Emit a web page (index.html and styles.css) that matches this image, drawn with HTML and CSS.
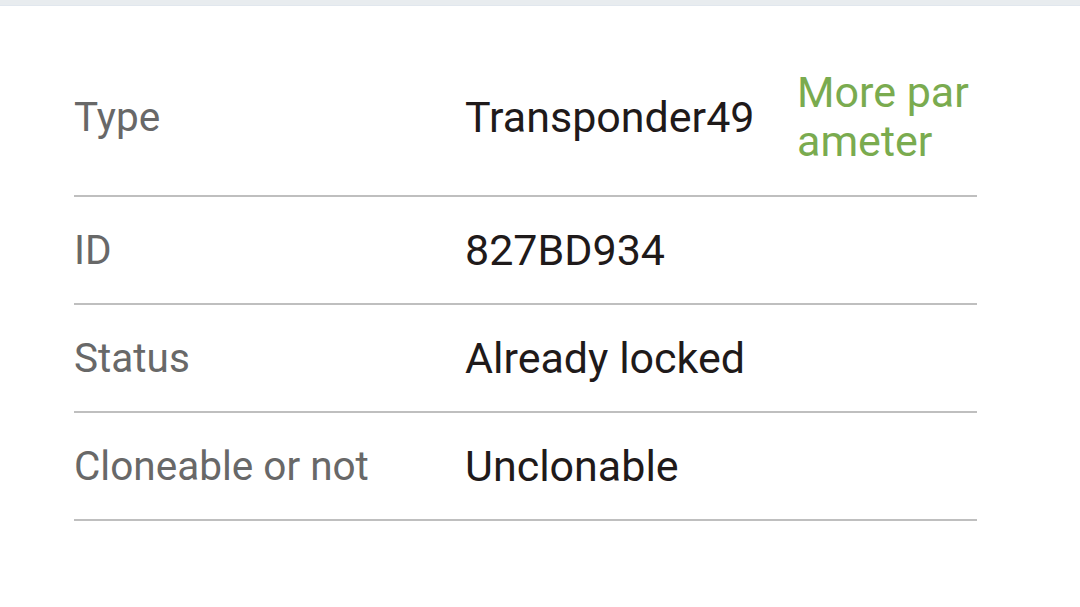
FILE: index.html
```html
<!DOCTYPE html>
<html>
<head>
<meta charset="utf-8">
<link rel="stylesheet" href="styles.css">
</head>
<body>
<div class="topbar"></div>
<div class="table">
  <div class="row">
    <div class="label">Type</div>
    <div class="value">Transponder49</div>
    <div class="more">More parameter</div>
  </div>
  <div class="row">
    <div class="label">ID</div>
    <div class="value">827BD934</div>
    <div class="more"></div>
  </div>
  <div class="row">
    <div class="label">Status</div>
    <div class="value">Already locked</div>
    <div class="more"></div>
  </div>
  <div class="row">
    <div class="label">Cloneable or not</div>
    <div class="value">Unclonable</div>
    <div class="more"></div>
  </div>
</div>
</body>
</html>
```
FILE: styles.css
```css
html, body {
  margin: 0;
  padding: 0;
  background: #ffffff;
  font-family: Roboto, "Noto Sans", sans-serif;
}
.topbar {
  height: 5px;
  background: #e8ecef;
  border-bottom: 1px solid #e1e7ee;
}
.table {
  margin: 33px 103px 0 74px;
}
.row {
  display: grid;
  grid-template-columns: 391px 332px 180px;
  align-items: center;
  padding: 29px 0;
  border-bottom: 2px solid #bfbfbf;
  line-height: 48px;
}
.label {
  font-size: 40.5px;
  color: #686868;
}
.value {
  font-size: 43px;
  color: #1f1a1a;
}
.more {
  font-size: 43px;
  line-height: 49px;
  color: #7aab4f;
  word-break: break-all;
}
```
